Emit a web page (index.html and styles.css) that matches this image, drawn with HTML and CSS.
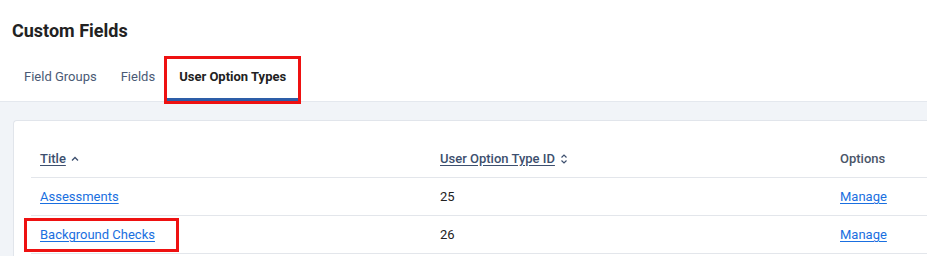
FILE: index.html
```html
<!DOCTYPE html>
<html>
<head>
    <meta charset="utf-8">
    <title>Custom Fields</title>
    <link rel="stylesheet" href="styles.css">
</head>
<body>
    <div class="page-head">
        <h1 class="page-title">Custom Fields</h1>
        <div class="tabs">
            <a class="tab">Field Groups</a>
            <a class="tab">Fields</a>
            <a class="tab active marked">User Option Types</a>
        </div>
    </div>

    <div class="content">
        <div class="card">
            <table class="grid">
                <thead>
                    <tr>
                        <th class="col"><a class="sort">Title</a>
                            <svg class="sort-icon" width="10" height="10" viewBox="0 0 10 10"><path d="M2 6.5 L5 3.5 L8 6.5" fill="none" stroke="#3d4f6e" stroke-width="1.3"/></svg>
                        </th>
                        <th class="col"><a class="sort">User Option Type ID</a>
                            <svg class="sort-icon" width="10" height="12" viewBox="0 0 10 12"><path d="M2.5 4.5 L5 2 L7.5 4.5 M2.5 7.5 L5 10 L7.5 7.5" fill="none" stroke="#3d4f6e" stroke-width="1.2"/></svg>
                        </th>
                        <th class="plain">Options</th>
                    </tr>
                </thead>
                <tbody>
                    <tr>
                        <td><a class="link">Assessments</a></td>
                        <td>25</td>
                        <td><a class="link">Manage</a></td>
                    </tr>
                    <tr>
                        <td><a class="link marked-row">Background Checks</a></td>
                        <td>26</td>
                        <td><a class="link">Manage</a></td>
                    </tr>
                </tbody>
            </table>
        </div>
    </div>
</body>
</html>
```

FILE: styles.css
```css
body, html {
    margin: 0;
    background: #fff;
    font-family: Roboto, "Liberation Sans", Arial, sans-serif;
    overflow: hidden;
}

.page-head {
    padding: 21px 0 0 12px;
}

.page-title {
    margin: 0;
    font-size: 18px;
    line-height: 20px;
    font-weight: 700;
    color: #222;
}

.tabs {
    display: flex;
    margin-top: 18px;
}

.tab {
    padding: 10px 12px 13px;
    font-size: 13px;
    line-height: 16px;
    color: #4a5a75;
    border-bottom: 3px solid transparent;
}

.tab.active {
    color: #222;
    font-weight: 700;
    border-bottom-color: #2d5ea8;
}

/* red annotation boxes */
.marked {
    outline: 3px solid #ee1111;
    outline-offset: 0;
}

.content {
    background: #f1f4f8;
    border-top: 1px solid #e4e8ee;
    padding: 18px 0 0 13px;
}

.card {
    background: #fff;
    border: 1px solid #e1e5eb;
    border-right: none;
    border-bottom: none;
    border-radius: 4px 0 0 0;
    padding: 18px 0 2px 17px;
}

.grid {
    border-collapse: collapse;
    width: 100%;
    font-size: 13px;
}

.grid th, .grid td {
    text-align: left;
    padding: 0 9px;
    height: 37px;
    border-bottom: 1px solid #e3e6eb;
    color: #222;
}

.grid .col {
    width: 382px;
}

.grid th {
    height: 38px;
    font-weight: 500;
    color: #3d4f6e;
}

.grid th.plain {
    color: #4a5568;
}

.sort {
    text-decoration: underline;
    text-underline-offset: 2px;
}

.sort-icon {
    vertical-align: middle;
    margin-left: 1px;
}

.link {
    color: #1a6fe0;
    text-decoration: underline;
    text-underline-offset: 2px;
}

.marked-row {
    position: relative;
}

.marked-row::before {
    content: "";
    position: absolute;
    left: -16px;
    right: -24px;
    top: -9px;
    bottom: -10px;
    border: 3px solid #ee1111;
}
```
